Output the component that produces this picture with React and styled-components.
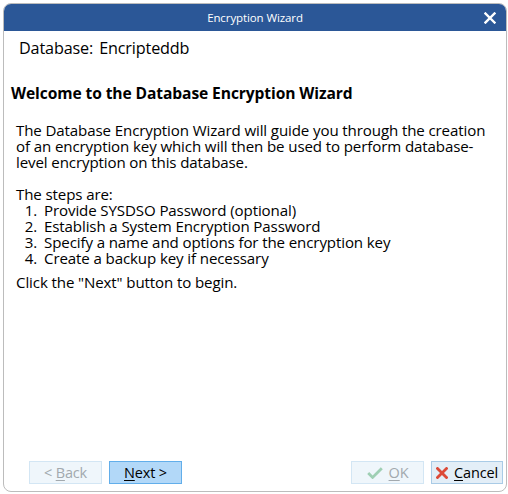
import React from 'react';
import styled, { createGlobalStyle } from 'styled-components';

const GlobalStyle = createGlobalStyle`
  html, body {
    margin: 0;
    padding: 0;
    background: #ffffff;
  }
  body {
    font-family: 'Open Sans', 'Noto Sans', sans-serif;
    color: #000;
  }
`;

// ============================================================
// Window frame
// ============================================================
const Window = styled.div`
  box-sizing: border-box;
  margin: 3px 0 0 3px;
  width: 504px;
  height: 489px;
  border: 1px solid #bcbcbc;
  border-radius: 8px;
  overflow: hidden;
  display: flex;
  flex-direction: column;
  background: #ffffff;
`;

const TitleBar = styled.div`
  position: relative;
  height: 27px;
  flex: none;
  background-color: #2b5797;
  display: flex;
  align-items: center;
  justify-content: center;
`;

const TitleText = styled.span`
  color: #ffffff;
  font-size: 11.5px;
  letter-spacing: -0.1px;
`;

const CloseButton = styled.button`
  position: absolute;
  right: 9px;
  top: 7px;
  width: 14px;
  height: 14px;
  padding: 0;
  border: none;
  background: transparent;
  display: flex;
  align-items: center;
  justify-content: center;
`;

// ============================================================
// Content
// ============================================================
const Content = styled.div`
  flex: 1;
  display: flex;
  flex-direction: column;
  padding: 0 0 7px 0;
`;

const DatabaseRow = styled.div`
  display: flex;
  gap: 6px;
  padding: 7px 0 0 15px;
  height: 30px;
  font-size: 16.2px;
  letter-spacing: -0.15px;
  line-height: 20px;
`;

const Heading = styled.h1`
  margin: 15px 0 0 7px;
  font-size: 15.6px;
  font-weight: 700;
  letter-spacing: -0.1px;
  line-height: 20px;
`;

const Body = styled.div`
  padding: 19px 0 0 12px;
  font-size: 15.1px;
  letter-spacing: -0.12px;
  line-height: 16px;
`;

const Paragraph = styled.p`
  margin: 0 0 ${p => p.gap || 0}px 0;
`;

const StepList = styled.ol`
  margin: 0 0 8px 0;
  padding: 0;
  list-style: none;
`;

const Step = styled.li`
  display: flex;
  height: 16px;
`;

const StepNumber = styled.span`
  width: 28px;
  text-align: right;
  padding-right: 7px;
  box-sizing: border-box;
`;

// ============================================================
// Footer buttons
// ============================================================
const Footer = styled.div`
  margin-top: auto;
  display: flex;
  align-items: center;
  padding: 0 3px 0 25px;
`;

const Spacer = styled.div`
  flex: 1;
`;

const Button = styled.button`
  box-sizing: border-box;
  height: 23px;
  width: ${p => p.width || 73}px;
  margin-left: ${p => p.offset || 0}px;
  padding: 0 4px;
  display: flex;
  align-items: center;
  justify-content: center;
  gap: 6px;
  font-family: 'Open Sans', 'Noto Sans', sans-serif;
  font-size: 14.5px;
  letter-spacing: -0.15px;
  color: ${p => (p.disabled ? '#a2a9ae' : '#000000')};
  background-color: ${p =>
    p.primary ? '#b2d8f8' : p.disabled ? '#eff6fb' : '#e3eef7'};
  border: 1px solid
    ${p => (p.primary ? '#62aeea' : p.disabled ? '#d3e6f4' : '#a9cbe6')};
  border-radius: 0;
`;

const Key = styled.span`
  text-decoration: underline;
  text-underline-offset: 2px;
`;

const CheckIcon = ({ color }) => (
  <svg width="16" height="12" viewBox="0 0 16 12">
    <path d="M1.2 6 L5.6 10.4 L14.8 1.2" fill="none" stroke={color} strokeWidth="2.8" />
  </svg>
);

const CrossIcon = ({ color, size = 12, width = 2.8 }) => (
  <svg width={size} height={size} viewBox="0 0 12 12">
    <path d="M1.5 1.5 L10.5 10.5 M10.5 1.5 L1.5 10.5" stroke={color} strokeWidth={width} strokeLinecap="square" />
  </svg>
);

const steps = [
  'Provide SYSDSO Password (optional)',
  'Establish a System Encryption Password',
  'Specify a name and options for the encryption key',
  'Create a backup key if necessary',
];

export default function App() {
  return (
    <>
      <GlobalStyle />
      <Window>
        <TitleBar>
          <TitleText>Encryption Wizard</TitleText>
          <CloseButton>
            <CrossIcon color="#ffffff" size={12} width={2.4} />
          </CloseButton>
        </TitleBar>
        <Content>
          <DatabaseRow>
            <span>Database:</span>
            <span>Encripteddb</span>
          </DatabaseRow>
          <Heading>Welcome to the Database Encryption Wizard</Heading>
          <Body>
            <Paragraph gap={16}>
              The Database Encryption Wizard will guide you through the creation
              <br />
              of an encryption key which will then be used to perform database-
              <br />
              level encryption on this database.
            </Paragraph>
            <Paragraph>The steps are:</Paragraph>
            <StepList>
              {steps.map((s, i) => (
                <Step key={s}>
                  <StepNumber>{i + 1}.</StepNumber>
                  <span>{s}</span>
                </Step>
              ))}
            </StepList>
            <Paragraph>Click the "Next" button to begin.</Paragraph>
          </Body>
          <Footer>
            <Button disabled>
              <span>
                &lt; <Key>B</Key>ack
              </span>
            </Button>
            <Button primary offset={7}>
              <span>
                <Key>N</Key>ext &gt;
              </span>
            </Button>
            <Spacer />
            <Button disabled>
              <CheckIcon color="#9fcfb4" />
              <span>
                <Key>O</Key>K
              </span>
            </Button>
            <Button offset={7} width={72}>
              <CrossIcon color="#dc4a38" />
              <span>
                <Key>C</Key>ancel
              </span>
            </Button>
          </Footer>
        </Content>
      </Window>
    </>
  );
}
